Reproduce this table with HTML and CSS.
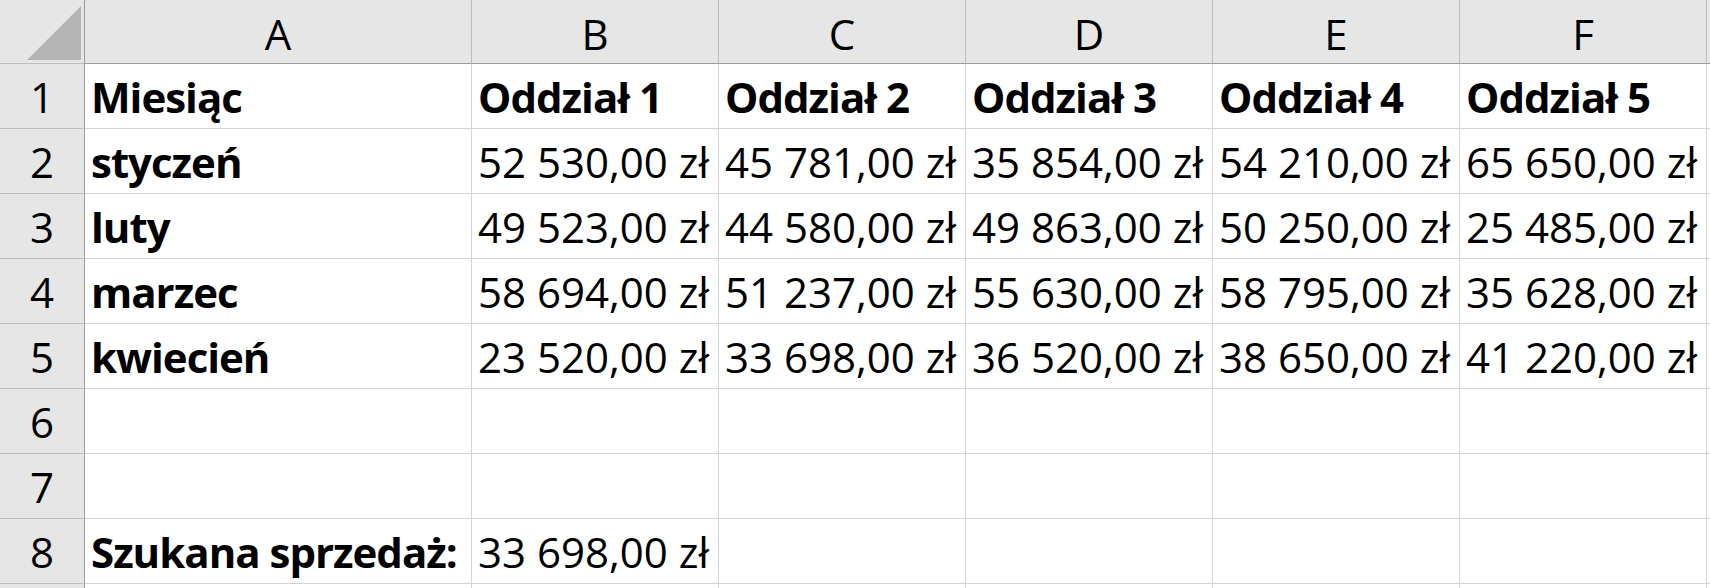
FILE: index.html
```html
<!DOCTYPE html>
<html lang="pl">
<head>
    <meta charset="UTF-8">
    <title>Arkusz - sprzedaż oddziałów</title>
    <link rel="stylesheet" href="styles.css">
</head>
<body>
    <div class="sheet">
        <!-- column headers -->
        <div class="corner"><span class="corner-mark"></span></div>
        <div class="col-head">A</div>
        <div class="col-head">B</div>
        <div class="col-head">C</div>
        <div class="col-head">D</div>
        <div class="col-head">E</div>
        <div class="col-head">F</div>
        <div class="col-head rest"></div>

        <div class="row-head">1</div>
        <div class="cell bold">Miesiąc</div>
        <div class="cell bold">Oddział 1</div>
        <div class="cell bold">Oddział 2</div>
        <div class="cell bold">Oddział 3</div>
        <div class="cell bold">Oddział 4</div>
        <div class="cell bold">Oddział 5</div>
        <div class="cell rest"></div>

        <div class="row-head">2</div>
        <div class="cell bold">styczeń</div>
        <div class="cell">52 530,00 zł</div>
        <div class="cell">45 781,00 zł</div>
        <div class="cell">35 854,00 zł</div>
        <div class="cell">54 210,00 zł</div>
        <div class="cell">65 650,00 zł</div>
        <div class="cell rest"></div>

        <div class="row-head">3</div>
        <div class="cell bold">luty</div>
        <div class="cell">49 523,00 zł</div>
        <div class="cell">44 580,00 zł</div>
        <div class="cell">49 863,00 zł</div>
        <div class="cell">50 250,00 zł</div>
        <div class="cell">25 485,00 zł</div>
        <div class="cell rest"></div>

        <div class="row-head">4</div>
        <div class="cell bold">marzec</div>
        <div class="cell">58 694,00 zł</div>
        <div class="cell">51 237,00 zł</div>
        <div class="cell">55 630,00 zł</div>
        <div class="cell">58 795,00 zł</div>
        <div class="cell">35 628,00 zł</div>
        <div class="cell rest"></div>

        <div class="row-head">5</div>
        <div class="cell bold">kwiecień</div>
        <div class="cell">23 520,00 zł</div>
        <div class="cell">33 698,00 zł</div>
        <div class="cell">36 520,00 zł</div>
        <div class="cell">38 650,00 zł</div>
        <div class="cell">41 220,00 zł</div>
        <div class="cell rest"></div>

        <div class="row-head">6</div>
        <div class="cell"></div>
        <div class="cell"></div>
        <div class="cell"></div>
        <div class="cell"></div>
        <div class="cell"></div>
        <div class="cell"></div>
        <div class="cell rest"></div>

        <div class="row-head">7</div>
        <div class="cell"></div>
        <div class="cell"></div>
        <div class="cell"></div>
        <div class="cell"></div>
        <div class="cell"></div>
        <div class="cell"></div>
        <div class="cell rest"></div>

        <div class="row-head">8</div>
        <div class="cell bold">Szukana sprzedaż:</div>
        <div class="cell">33 698,00 zł</div>
        <div class="cell"></div>
        <div class="cell"></div>
        <div class="cell"></div>
        <div class="cell"></div>
        <div class="cell rest"></div>

        <!-- next row, only its top edge is in view -->
        <div class="row-head"></div>
        <div class="cell"></div>
        <div class="cell"></div>
        <div class="cell"></div>
        <div class="cell"></div>
        <div class="cell"></div>
        <div class="cell"></div>
        <div class="cell rest"></div>
    </div>
</body>
</html>
```

FILE: styles.css
```css
html, body {
    margin: 0;
    padding: 0;
    background: #ffffff;
    overflow: hidden;
}
body {
    font-family: "Open Sans", "Liberation Sans", sans-serif;
    font-size: 42px;
    color: #000000;
}
.sheet {
    display: grid;
    grid-template-columns: 85px 387px repeat(5, 247px) 1fr;
    grid-template-rows: 64px repeat(9, 65px);
    width: 1710px;
    height: 588px;
    overflow: hidden;
}
.corner,
.col-head,
.row-head,
.cell {
    box-sizing: border-box;
    display: flex;
    align-items: flex-end;
    line-height: 1;
    white-space: nowrap;
    overflow: hidden;
}
.corner {
    background: #e6e6e6;
    border-right: 1px solid #9b9b9b;
    border-bottom: 1px solid #bdbdbd;
    position: relative;
}
.corner-mark {
    position: absolute;
    left: 27px;
    top: 6px;
    width: 54px;
    height: 54px;
    background: #b4b4b4;
    clip-path: polygon(100% 0, 100% 100%, 0 100%);
}
.col-head {
    background: #e6e6e6;
    justify-content: center;
    padding-bottom: 8px;
    border-right: 1px solid #bdbdbd;
    border-bottom: 1px solid #9b9b9b;
    background-clip: padding-box;
}
.col-head.rest {
    border-right: none;
}
.row-head {
    background: #e6e6e6;
    justify-content: center;
    padding-bottom: 10px;
    border-right: 1px solid #9b9b9b;
    border-bottom: 1px solid #bdbdbd;
}
.cell {
    padding: 0 0 10px 6px;
    border-right: 1px solid #d4d4d4;
    border-bottom: 1px solid #d4d4d4;
}
.cell.rest {
    border-right: none;
}
.bold {
    font-weight: 700;
    letter-spacing: -1px;
}
```
